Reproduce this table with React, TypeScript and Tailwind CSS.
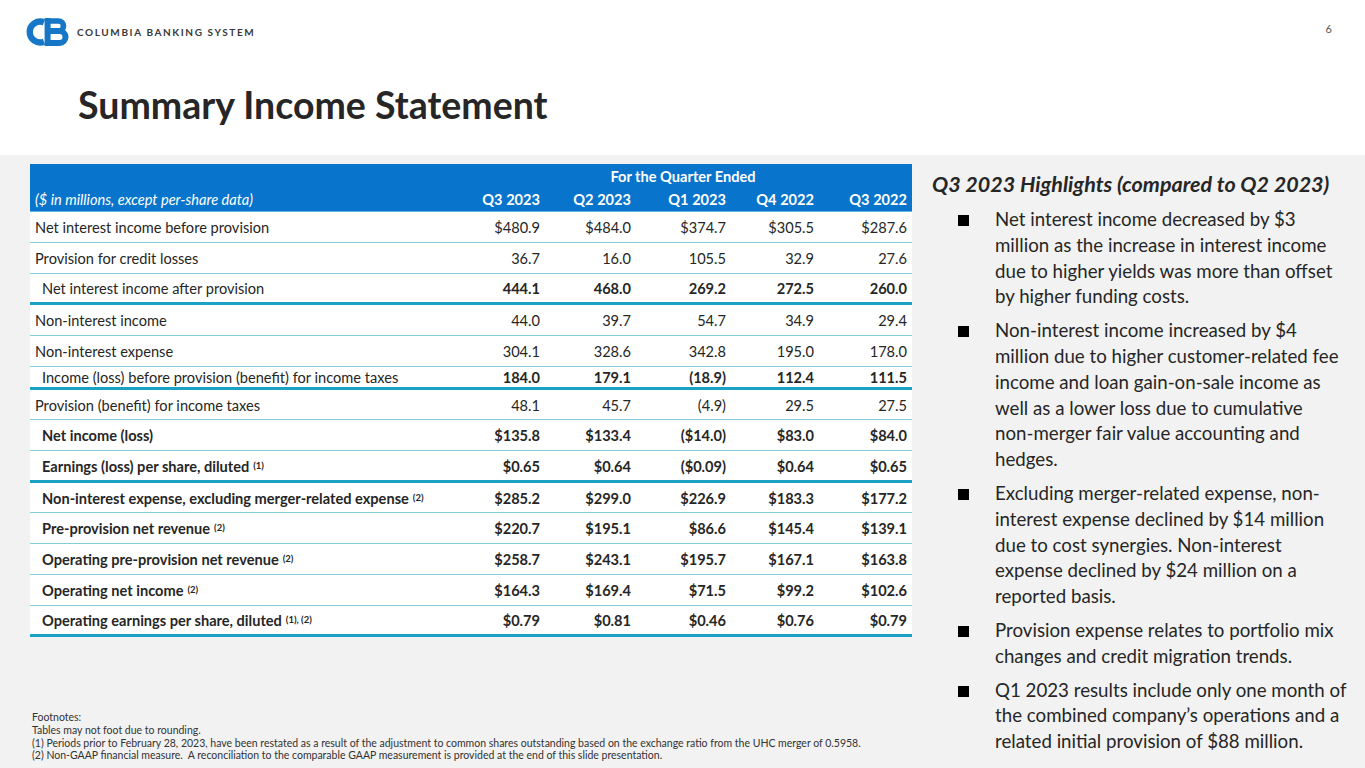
import React from "react";

type Row = {
  label: string;
  sup?: string;
  values: string[];
  labelBold?: boolean;
  valueBold?: boolean;
  indent?: boolean;
  h: string;
  thick?: boolean;
};

const rows: Row[] = [
  { label: "Net interest income before provision", values: ["$480.9", "$484.0", "$374.7", "$305.5", "$287.6"], h: "h-[31px] pt-[2px]" },
  { label: "Provision for credit losses", values: ["36.7", "16.0", "105.5", "32.9", "27.6"], h: "h-[31px] pt-[2px]" },
  { label: "Net interest income after provision", values: ["444.1", "468.0", "269.2", "272.5", "260.0"], valueBold: true, indent: true, h: "h-[31px] pt-[2px]", thick: true },
  { label: "Non-interest income", values: ["44.0", "39.7", "54.7", "34.9", "29.4"], h: "h-[31px] pt-[2px]" },
  { label: "Non-interest expense", values: ["304.1", "328.6", "342.8", "195.0", "178.0"], h: "h-[31px] pt-[2px]" },
  { label: "Income (loss) before provision (benefit) for income taxes", values: ["184.0", "179.1", "(18.9)", "112.4", "111.5"], valueBold: true, indent: true, h: "h-[23px]", thick: true },
  { label: "Provision (benefit) for income taxes", values: ["48.1", "45.7", "(4.9)", "29.5", "27.5"], h: "h-[30px] pt-[2px]" },
  { label: "Net income (loss)", values: ["$135.8", "$133.4", "($14.0)", "$83.0", "$84.0"], labelBold: true, valueBold: true, indent: true, h: "h-[31px] pt-[2px]" },
  { label: "Earnings (loss) per share, diluted", sup: "(1)", values: ["$0.65", "$0.64", "($0.09)", "$0.64", "$0.65"], labelBold: true, valueBold: true, indent: true, h: "h-[32px] pt-[2px]", thick: true },
  { label: "Non-interest expense, excluding merger-related expense", sup: "(2)", values: ["$285.2", "$299.0", "$226.9", "$183.3", "$177.2"], labelBold: true, valueBold: true, indent: true, h: "h-[30px] pt-[2px]" },
  { label: "Pre-provision net revenue", sup: "(2)", values: ["$220.7", "$195.1", "$86.6", "$145.4", "$139.1"], labelBold: true, valueBold: true, indent: true, h: "h-[31px] pt-[2px]" },
  { label: "Operating pre-provision net revenue", sup: "(2)", values: ["$258.7", "$243.1", "$195.7", "$167.1", "$163.8"], labelBold: true, valueBold: true, indent: true, h: "h-[31px] pt-[2px]" },
  { label: "Operating net income", sup: "(2)", values: ["$164.3", "$169.4", "$71.5", "$99.2", "$102.6"], labelBold: true, valueBold: true, indent: true, h: "h-[31px] pt-[2px]" },
  { label: "Operating earnings per share, diluted", sup: "(1), (2)", values: ["$0.79", "$0.81", "$0.46", "$0.76", "$0.79"], labelBold: true, valueBold: true, indent: true, h: "h-[31px] pt-[2px]", thick: true },
];

const bullets: string[][] = [
  ["Net interest income decreased by $3", "million as the increase in interest income", "due to higher yields was more than offset", "by higher funding costs."],
  ["Non-interest income increased by $4", "million due to higher customer-related fee", "income and loan gain-on-sale income as", "well as a lower loss due to cumulative", "non-merger fair value accounting and", "hedges."],
  ["Excluding merger-related expense, non-", "interest expense declined by $14 million", "due to cost synergies. Non-interest", "expense declined by $24 million on a", "reported basis."],
  ["Provision expense relates to portfolio mix", "changes and credit migration trends."],
  ["Q1 2023 results include only one month of", "the combined company\u2019s operations and a", "related initial provision of $88 million."],
];

const grid = "grid grid-cols-[424px_91px_91px_95px_88px_93px]";

function Logo() {
  return (
    <svg width="44" height="30" viewBox="0 0 44 30" className="block">
      <path d="M19 5.2 A10.5 10.5 0 1 0 19 24.8" fill="none" stroke="#1677c7" strokeWidth="6.4" />
      <path d="M22.6 1 V29" stroke="#1677c7" strokeWidth="6" />
      <path d="M22 4 H33.5 A5 5 0 0 1 33.5 14 H22" fill="none" stroke="#1677c7" strokeWidth="5.6" />
      <path d="M22 14 H34.5 A6 6 0 0 1 34.5 26 H22" fill="none" stroke="#1677c7" strokeWidth="6" />
    </svg>
  );
}

export default function App() {
  return (
    <div className="w-[1365px] h-[768px] bg-white flex flex-col font-['Lato',sans-serif] text-[#262626] overflow-hidden">
      <header className="h-[155px] flex flex-col">
        <div className="flex items-center justify-between pt-[17px] pl-[25px] pr-[33px]">
          <div className="flex items-center gap-[8px]">
            <Logo />
            <span className="text-[10px] font-bold tracking-[1.6px] text-[#3a3a3a] leading-none">COLUMBIA BANKING SYSTEM</span>
          </div>
          <span className="text-[11px] text-[#595959] self-start mt-[4px]">6</span>
        </div>
        <h1 className="pl-[78px] mt-[37px] text-[37.5px] font-bold leading-[42px] text-[#262626]">Summary Income Statement</h1>
      </header>

      <main className="flex-1 bg-[#f2f2f2] flex">
        <div className="w-[912px] flex flex-col justify-between pl-[30px] pt-[9px] pb-[6px]">
          <div className="w-[882px]">
            <div className="bg-[#0874cc] text-white border-b border-[#5fb8e0]">
              <div className={`${grid} h-[24px] items-center`}>
                <div />
                <div className="col-span-5 text-center font-bold text-[14.6px] pt-[2px]">For the Quarter Ended</div>
              </div>
              <div className={`${grid} h-[23px] items-center text-[14.6px]`}>
                <div className="pl-[5px] italic">($ in millions, except per-share data)</div>
                {["Q3 2023", "Q2 2023", "Q1 2023", "Q4 2022", "Q3 2022"].map((q) => (
                  <div key={q} className="text-right pr-[5px] font-bold">{q}</div>
                ))}
              </div>
            </div>
            {rows.map((r) => (
              <div
                key={r.label}
                className={`${grid} ${r.h} items-center bg-white text-[14.6px] ${r.thick ? "border-b-[3px] border-[#1ba1c4]" : "border-b border-[#7fd0dc]"}`}
              >
                <div className={`${r.indent ? "pl-[12px]" : "pl-[5px]"} ${r.labelBold ? "font-bold" : ""} whitespace-nowrap`}>
                  {r.label}
                  {r.sup && <sup className="text-[9.5px] font-bold ml-[4px] relative -top-[3px]">{r.sup}</sup>}
                </div>
                {r.values.map((v, i) => (
                  <div key={i} className={`text-right pr-[5px] ${r.valueBold ? "font-bold" : ""}`}>{v}</div>
                ))}
              </div>
            ))}
          </div>
          <div className="text-[10.5px] leading-[12.7px] text-[#333] pl-[2px]">
            <div>Footnotes:</div>
            <div>Tables may not foot due to rounding.</div>
            <div>(1) Periods prior to February 28, 2023, have been restated as a result of the adjustment to common shares outstanding based on the exchange ratio from the UHC merger of 0.5958.</div>
            <div>(2) Non-GAAP financial measure.&nbsp; A reconciliation to the comparable GAAP measurement is provided at the end of this slide presentation.</div>
          </div>
        </div>

        <div className="flex-1 pl-[20px] pt-[16px]">
          <h2 className="text-[21.5px] font-bold italic leading-[26px] whitespace-nowrap">Q3 2023 Highlights (compared to Q2 2023)</h2>
          <div className="mt-[10px] flex flex-col gap-[8px]">
            {bullets.map((b, i) => (
              <div key={i} className="flex">
                <div className="w-[63px] flex justify-end pr-[26px] pt-[8px]">
                  <div className="w-[11px] h-[11px] bg-black" />
                </div>
                <div className="text-[18.7px] leading-[25.8px] whitespace-nowrap">
                  {b.map((l, j) => (
                    <div key={j}>{l}</div>
                  ))}
                </div>
              </div>
            ))}
          </div>
        </div>
      </main>
    </div>
  );
}
